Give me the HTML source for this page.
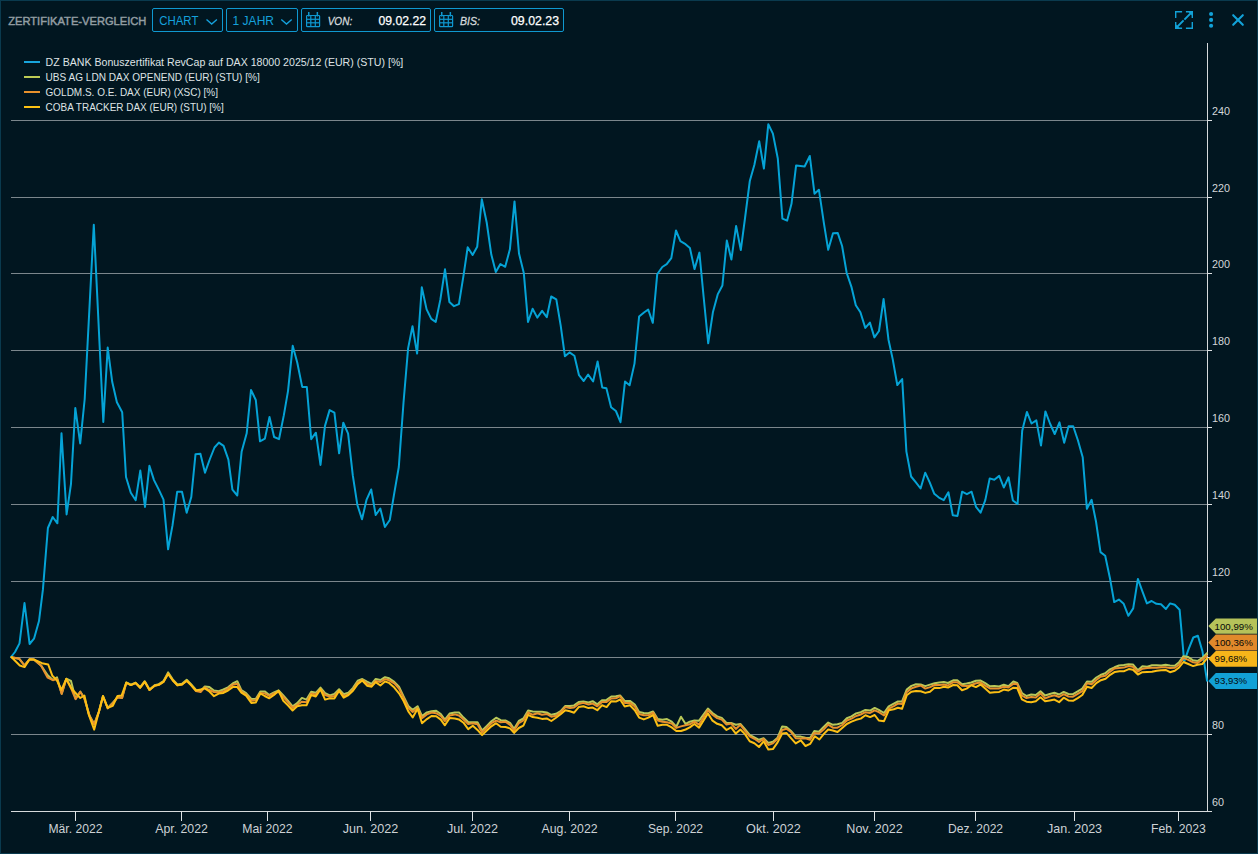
<!DOCTYPE html>
<html><head><meta charset="utf-8">
<style>
html,body{margin:0;padding:0;background:#011620;}
body{width:1258px;height:854px;overflow:hidden;}
svg{display:block;font-family:"Liberation Sans", sans-serif;}
</style></head>
<body>
<svg width="1258" height="854" viewBox="0 0 1258 854">
<rect x="0" y="0" width="1258" height="854" fill="#011620"/>
<rect x="0.5" y="0.5" width="1257" height="853" fill="none" stroke="#0a3a4e" stroke-width="1"/>

<!-- header -->
<text x="8.2" y="24.6" font-size="11.7" fill="#939ea3" stroke="#939ea3" stroke-width="0.45" textLength="138.2" lengthAdjust="spacingAndGlyphs">ZERTIFIKATE-VERGLEICH</text>
<rect x="152.5" y="8.5" width="70" height="23" rx="1.5" fill="none" stroke="#0f98d0"/>
<text x="159.2" y="25" font-size="12.5" fill="#15a1dc" textLength="39.2" lengthAdjust="spacingAndGlyphs">CHART</text>
<polyline points="206.5,19.5 211.7,24 216.9,19.5" fill="none" stroke="#15a1dc" stroke-width="1.4"/>
<rect x="226.5" y="8.5" width="71" height="23" rx="1.5" fill="none" stroke="#0f98d0"/>
<text x="232.6" y="25" font-size="12.5" fill="#15a1dc" textLength="41.4" lengthAdjust="spacingAndGlyphs">1 JAHR</text>
<polyline points="281.3,19.5 286.5,24 291.7,19.5" fill="none" stroke="#15a1dc" stroke-width="1.4"/>

<rect x="301.5" y="8.5" width="129" height="23" rx="1.5" fill="none" stroke="#0f98d0"/>
<g fill="none" stroke="#0f98d0" stroke-width="1.2">
<rect x="306.6" y="15.5" width="13" height="11.2" rx="0.8"/>
<line x1="310.8" y1="15.5" x2="310.8" y2="26.7"/><line x1="315.3" y1="15.5" x2="315.3" y2="26.7"/>
<line x1="306.6" y1="19.3" x2="319.6" y2="19.3"/><line x1="306.6" y1="22.8" x2="319.6" y2="22.8"/>
</g>
<g fill="#0f98d0"><rect x="308" y="12" width="1.5" height="4.5"/><rect x="316.6" y="12" width="1.5" height="4.5"/></g>
<text x="327.7" y="24.8" font-size="11.5" font-style="italic" fill="#d6dadc" stroke="#d6dadc" stroke-width="0.3" textLength="24.5" lengthAdjust="spacingAndGlyphs">VON:</text>
<text x="378.4" y="24.9" font-size="12.5" fill="#ffffff" stroke="#ffffff" stroke-width="0.25" textLength="47.6" lengthAdjust="spacingAndGlyphs">09.02.22</text>

<rect x="434.5" y="8.5" width="129" height="23" rx="1.5" fill="none" stroke="#0f98d0"/>
<g fill="none" stroke="#0f98d0" stroke-width="1.2">
<rect x="439.6" y="15.5" width="13" height="11.2" rx="0.8"/>
<line x1="443.8" y1="15.5" x2="443.8" y2="26.7"/><line x1="448.3" y1="15.5" x2="448.3" y2="26.7"/>
<line x1="439.6" y1="19.3" x2="452.6" y2="19.3"/><line x1="439.6" y1="22.8" x2="452.6" y2="22.8"/>
</g>
<g fill="#0f98d0"><rect x="441" y="12" width="1.5" height="4.5"/><rect x="449.6" y="12" width="1.5" height="4.5"/></g>
<text x="460" y="24.8" font-size="11.5" font-style="italic" fill="#d6dadc" stroke="#d6dadc" stroke-width="0.3" textLength="19.9" lengthAdjust="spacingAndGlyphs">BIS:</text>
<text x="511" y="24.9" font-size="12.5" fill="#ffffff" stroke="#ffffff" stroke-width="0.25" textLength="48.1" lengthAdjust="spacingAndGlyphs">09.02.23</text>

<!-- right icons -->
<g fill="none" stroke="#12a2d8" stroke-width="1.4">
<path d="M1175.7 17.9 V11.7 H1182.1"/>
<path d="M1192.3 21.9 V28.3 H1185.9"/>
<path d="M1185.9 11.7 H1192.3 V18.1"/>
<path d="M1175.7 21.9 V28.3 H1182.1"/>
<path d="M1191.6 12.4 L1184.4 19.6 M1183.6 20.4 L1176.4 27.6" stroke-width="2"/>
<path d="M1233.2 15.2 L1242.8 24.8 M1242.8 15.2 L1233.2 24.8" stroke-width="2.1" stroke-linecap="round"/>
</g>
<g fill="#12a2d8">
<polygon points="1187.5,11 1193,11 1193,16.5"/>
<polygon points="1175,23.5 1175,29 1180.5,29"/>
<circle cx="1211.1" cy="14" r="2.05"/><circle cx="1211.1" cy="19.9" r="2.05"/><circle cx="1211.1" cy="25.8" r="2.05"/>
</g>

<!-- legend -->
<g stroke-width="2">
<line x1="24" y1="62" x2="40" y2="62" stroke="#18a5dc"/>
<line x1="24" y1="77" x2="40" y2="77" stroke="#bccb55"/>
<line x1="24" y1="92" x2="40" y2="92" stroke="#e8912c"/>
<line x1="24" y1="107" x2="40" y2="107" stroke="#fcc214"/>
</g>
<g font-size="10.8" fill="#dfe3e5">
<text x="45.6" y="65.8" textLength="357.7" lengthAdjust="spacingAndGlyphs">DZ BANK Bonuszertifikat RevCap auf DAX 18000 2025/12 (EUR) (STU) [%]</text>
<text x="45.6" y="80.8" textLength="214.2" lengthAdjust="spacingAndGlyphs">UBS AG LDN DAX OPENEND (EUR) (STU) [%]</text>
<text x="45.6" y="95.8" textLength="172.4" lengthAdjust="spacingAndGlyphs">GOLDM.S. O.E. DAX (EUR) (XSC) [%]</text>
<text x="45.6" y="110.8" textLength="178.1" lengthAdjust="spacingAndGlyphs">COBA TRACKER DAX (EUR) (STU) [%]</text>
</g>

<!-- grid -->
<line x1="11" y1="120.5" x2="1207" y2="120.5" stroke="#7b868c" stroke-width="1"/><line x1="1207" y1="120.5" x2="1212" y2="120.5" stroke="#dfe3e5" stroke-width="1"/><line x1="11" y1="197.5" x2="1207" y2="197.5" stroke="#7b868c" stroke-width="1"/><line x1="1207" y1="197.5" x2="1212" y2="197.5" stroke="#dfe3e5" stroke-width="1"/><line x1="11" y1="273.5" x2="1207" y2="273.5" stroke="#7b868c" stroke-width="1"/><line x1="1207" y1="273.5" x2="1212" y2="273.5" stroke="#dfe3e5" stroke-width="1"/><line x1="11" y1="350.5" x2="1207" y2="350.5" stroke="#7b868c" stroke-width="1"/><line x1="1207" y1="350.5" x2="1212" y2="350.5" stroke="#dfe3e5" stroke-width="1"/><line x1="11" y1="427.5" x2="1207" y2="427.5" stroke="#7b868c" stroke-width="1"/><line x1="1207" y1="427.5" x2="1212" y2="427.5" stroke="#dfe3e5" stroke-width="1"/><line x1="11" y1="504.5" x2="1207" y2="504.5" stroke="#7b868c" stroke-width="1"/><line x1="1207" y1="504.5" x2="1212" y2="504.5" stroke="#dfe3e5" stroke-width="1"/><line x1="11" y1="581.5" x2="1207" y2="581.5" stroke="#7b868c" stroke-width="1"/><line x1="1207" y1="581.5" x2="1212" y2="581.5" stroke="#dfe3e5" stroke-width="1"/><line x1="11" y1="657.5" x2="1207" y2="657.5" stroke="#7b868c" stroke-width="1"/><line x1="1207" y1="657.5" x2="1212" y2="657.5" stroke="#dfe3e5" stroke-width="1"/><line x1="11" y1="734.5" x2="1207" y2="734.5" stroke="#7b868c" stroke-width="1"/><line x1="1207" y1="734.5" x2="1212" y2="734.5" stroke="#dfe3e5" stroke-width="1"/>
<!-- axes -->
<line x1="1207.5" y1="43" x2="1207.5" y2="811" stroke="#d6dadc" stroke-width="1"/>
<line x1="11" y1="811.5" x2="1212" y2="811.5" stroke="#d6dadc" stroke-width="1"/>
<text x="1212" y="114.5" font-size="11.5" fill="#d3d7da" textLength="18.0" lengthAdjust="spacingAndGlyphs">240</text><text x="1212" y="191.5" font-size="11.5" fill="#d3d7da" textLength="18.0" lengthAdjust="spacingAndGlyphs">220</text><text x="1212" y="267.5" font-size="11.5" fill="#d3d7da" textLength="18.0" lengthAdjust="spacingAndGlyphs">200</text><text x="1212" y="344.5" font-size="11.5" fill="#d3d7da" textLength="18.0" lengthAdjust="spacingAndGlyphs">180</text><text x="1212" y="421.5" font-size="11.5" fill="#d3d7da" textLength="18.0" lengthAdjust="spacingAndGlyphs">160</text><text x="1212" y="498.5" font-size="11.5" fill="#d3d7da" textLength="18.0" lengthAdjust="spacingAndGlyphs">140</text><text x="1212" y="575.5" font-size="11.5" fill="#d3d7da" textLength="18.0" lengthAdjust="spacingAndGlyphs">120</text><text x="1212" y="728.5" font-size="11.5" fill="#d3d7da" textLength="12.0" lengthAdjust="spacingAndGlyphs">80</text><text x="1212" y="805.5" font-size="11.5" fill="#d3d7da" textLength="12.0" lengthAdjust="spacingAndGlyphs">60</text>
<line x1="75.5" y1="811" x2="75.5" y2="821" stroke="#dfe3e5" stroke-width="1"/><text x="48.5" y="832.8" font-size="12.6" fill="#cdd2d5" textLength="54" lengthAdjust="spacingAndGlyphs">Mär. 2022</text><line x1="181.5" y1="811" x2="181.5" y2="821" stroke="#dfe3e5" stroke-width="1"/><text x="155.2" y="832.8" font-size="12.6" fill="#cdd2d5" textLength="52.7" lengthAdjust="spacingAndGlyphs">Apr. 2022</text><line x1="267.5" y1="811" x2="267.5" y2="821" stroke="#dfe3e5" stroke-width="1"/><text x="242.3" y="832.8" font-size="12.6" fill="#cdd2d5" textLength="50.3" lengthAdjust="spacingAndGlyphs">Mai 2022</text><line x1="370.5" y1="811" x2="370.5" y2="821" stroke="#dfe3e5" stroke-width="1"/><text x="342.8" y="832.8" font-size="12.6" fill="#cdd2d5" textLength="55.4" lengthAdjust="spacingAndGlyphs">Jun. 2022</text><line x1="472.5" y1="811" x2="472.5" y2="821" stroke="#dfe3e5" stroke-width="1"/><text x="446.9" y="832.8" font-size="12.6" fill="#cdd2d5" textLength="51.1" lengthAdjust="spacingAndGlyphs">Jul. 2022</text><line x1="569.5" y1="811" x2="569.5" y2="821" stroke="#dfe3e5" stroke-width="1"/><text x="541.5" y="832.8" font-size="12.6" fill="#cdd2d5" textLength="56.1" lengthAdjust="spacingAndGlyphs">Aug. 2022</text><line x1="675.5" y1="811" x2="675.5" y2="821" stroke="#dfe3e5" stroke-width="1"/><text x="648.0" y="832.8" font-size="12.6" fill="#cdd2d5" textLength="55.1" lengthAdjust="spacingAndGlyphs">Sep. 2022</text><line x1="773.5" y1="811" x2="773.5" y2="821" stroke="#dfe3e5" stroke-width="1"/><text x="746.1" y="832.8" font-size="12.6" fill="#cdd2d5" textLength="54.8" lengthAdjust="spacingAndGlyphs">Okt. 2022</text><line x1="874.5" y1="811" x2="874.5" y2="821" stroke="#dfe3e5" stroke-width="1"/><text x="846.3" y="832.8" font-size="12.6" fill="#cdd2d5" textLength="56.4" lengthAdjust="spacingAndGlyphs">Nov. 2022</text><line x1="975.5" y1="811" x2="975.5" y2="821" stroke="#dfe3e5" stroke-width="1"/><text x="948.0" y="832.8" font-size="12.6" fill="#cdd2d5" textLength="55.1" lengthAdjust="spacingAndGlyphs">Dez. 2022</text><line x1="1074.5" y1="811" x2="1074.5" y2="821" stroke="#dfe3e5" stroke-width="1"/><text x="1047.0" y="832.8" font-size="12.6" fill="#cdd2d5" textLength="55.1" lengthAdjust="spacingAndGlyphs">Jan. 2023</text><line x1="1178.5" y1="811" x2="1178.5" y2="821" stroke="#dfe3e5" stroke-width="1"/><text x="1151.0" y="832.8" font-size="12.6" fill="#cdd2d5" textLength="54.9" lengthAdjust="spacingAndGlyphs">Feb. 2023</text>

<!-- series -->
<g fill="none" stroke-width="2" stroke-linejoin="round" stroke-linecap="round">
<polyline points="11.0,657.0 15.0,652.0 19.5,643.4 24.5,603.0 29.6,644.0 34.0,638.7 39.0,621.0 42.9,589.7 47.9,528.0 52.7,517.0 57.4,523.3 61.5,433.2 66.6,514.4 71.0,483.8 75.3,408.0 80.2,443.4 84.7,399.0 93.8,224.7 103.3,422.0 107.7,347.6 112.2,381.8 116.9,402.3 122.2,412.2 126.0,477.0 130.8,492.8 135.7,500.2 140.3,470.6 145.0,506.9 149.4,465.8 154.0,480.1 158.8,489.6 163.5,499.7 168.1,549.3 172.5,525.4 177.2,491.7 182.0,491.7 186.7,512.8 191.3,497.0 195.5,454.2 200.4,453.8 205.0,472.7 209.9,459.0 214.5,447.5 218.9,442.6 223.6,445.8 228.4,459.7 232.4,489.6 237.3,495.5 241.6,451.8 246.7,433.3 251.0,390.0 255.8,400.0 260.0,441.3 264.9,438.6 269.5,417.0 274.1,437.0 279.0,439.2 283.8,415.4 288.0,391.1 292.7,345.8 297.3,362.7 302.2,386.9 306.8,386.9 311.2,439.2 315.9,432.7 320.5,464.9 325.0,425.9 329.6,410.1 334.4,412.6 339.1,453.3 343.3,422.7 348.1,433.7 352.8,475.4 357.3,504.7 362.0,519.2 366.6,499.6 371.2,489.5 375.7,515.0 380.3,508.5 384.9,527.0 389.8,520.0 394.4,492.3 398.8,467.0 403.5,402.7 408.1,348.4 412.5,326.2 417.1,353.6 421.8,287.2 426.6,309.4 431.3,318.9 435.7,322.0 440.3,299.9 445.0,269.3 449.4,302.0 454.0,306.2 458.9,304.1 463.5,275.6 467.7,247.2 472.6,255.0 477.2,246.8 481.8,199.3 486.7,222.5 491.3,254.6 495.8,272.1 500.4,264.0 505.2,266.8 509.9,249.3 514.5,201.4 519.0,253.5 523.8,272.9 528.0,322.0 532.6,308.8 537.3,317.6 542.1,310.9 546.8,317.2 551.2,296.5 556.3,299.3 560.7,325.6 564.9,356.2 569.5,352.4 574.4,355.8 579.0,375.2 583.7,381.0 588.1,374.5 593.1,381.5 597.6,361.5 602.2,387.4 606.4,388.2 611.1,407.2 615.9,411.0 620.5,422.2 625.0,381.5 629.6,385.3 634.5,363.6 639.1,316.6 644.0,312.5 648.2,309.5 652.8,322.8 657.2,274.3 662.3,267.0 666.7,264.2 671.3,258.1 676.0,230.5 680.4,241.2 685.5,244.2 689.9,248.0 694.5,269.1 699.4,252.6 703.6,296.5 708.2,343.3 712.9,312.3 717.7,294.4 722.4,285.5 726.8,240.6 731.4,259.6 736.1,225.9 740.8,250.1 745.1,217.5 749.8,181.0 754.4,164.8 759.2,141.2 763.9,168.6 768.3,124.3 772.9,133.6 777.8,158.5 782.4,218.6 787.1,220.7 791.5,203.8 796.1,165.4 800.4,166.0 804.6,166.5 809.8,156.0 814.5,193.7 818.9,189.7 824.0,223.8 828.2,249.8 833.0,233.3 837.7,232.9 842.1,246.0 846.7,273.0 851.6,287.4 855.8,305.3 860.4,312.3 865.3,327.9 869.9,322.6 874.4,337.4 879.0,331.0 883.6,299.0 888.5,339.7 892.7,359.1 897.3,385.0 902.2,379.1 906.4,451.6 911.1,476.5 915.7,482.2 920.6,488.5 925.2,472.7 929.6,482.2 934.3,493.8 938.9,497.6 943.8,500.1 948.4,492.3 952.8,515.3 957.5,515.9 962.1,491.7 966.9,494.2 971.6,491.7 976.0,506.8 980.6,512.7 985.3,500.1 989.7,478.4 994.3,479.7 999.2,475.9 1003.8,487.5 1008.5,477.3 1012.9,500.5 1017.6,504.0 1022.2,430.8 1026.9,411.9 1031.5,423.5 1036.3,420.3 1041.0,445.6 1045.4,411.4 1050.0,423.5 1054.7,434.0 1059.5,422.4 1064.2,442.8 1068.6,426.2 1073.2,426.2 1077.9,440.3 1082.7,457.2 1086.9,508.8 1091.6,499.8 1096.0,521.5 1100.5,552.1 1105.2,555.7 1110.0,578.5 1114.2,602.1 1118.9,599.6 1123.7,603.8 1128.4,615.8 1133.2,608.4 1137.9,578.9 1142.3,591.1 1146.9,603.4 1151.6,601.0 1156.4,603.8 1161.0,604.2 1165.9,609.0 1170.1,603.4 1174.7,604.8 1179.6,609.7 1184.2,661.7 1188.6,649.1 1193.3,637.5 1197.9,635.8 1202.4,651.2 1207.0,680.7" stroke="#05a3d6"/>
<polyline points="11.6,657.2 19.3,658.8 24.5,665.4 29.6,659.2 33.8,659.4 41.0,665.4 47.7,675.3 52.9,680.0 57.0,677.4 61.7,693.7 66.3,678.7 71.0,681.0 75.6,698.8 80.3,691.6 84.4,698.3 89.6,715.8 94.2,724.1 98.9,711.7 103.0,696.1 107.7,708.0 112.3,703.3 117.5,697.1 122.1,697.7 126.3,682.5 130.9,684.6 135.6,682.6 140.2,687.2 144.8,681.2 149.5,689.4 154.6,685.2 158.8,684.1 163.4,681.2 168.1,672.4 172.7,679.4 177.4,684.5 182.0,683.8 186.7,679.8 191.3,684.4 196.0,690.0 200.6,691.0 204.8,686.4 209.4,687.1 214.0,690.5 218.7,691.3 223.4,689.5 228.0,687.3 232.7,683.5 237.3,681.2 241.4,690.2 246.1,693.1 251.3,699.0 255.9,698.8 260.3,691.4 264.7,691.4 269.3,695.0 274.0,692.4 278.6,690.3 283.3,695.5 287.9,700.6 292.6,706.3 297.2,703.2 301.9,697.9 306.5,699.6 311.2,691.7 315.8,692.8 320.5,687.6 325.1,693.2 329.8,695.5 334.4,693.9 339.1,689.3 343.7,694.2 348.4,692.6 353.0,687.9 357.7,680.7 362.3,679.0 367.0,681.7 371.6,683.8 375.7,679.0 380.4,680.0 385.0,677.2 389.1,678.3 394.3,681.9 399.0,686.6 403.6,696.4 408.3,706.0 412.7,709.9 417.6,706.2 422.0,716.1 426.9,712.4 431.5,711.3 436.2,710.8 440.8,714.0 444.9,719.6 449.6,713.5 454.8,712.4 458.9,712.4 463.5,717.6 468.2,721.9 472.8,722.2 477.5,722.3 482.1,730.5 486.8,725.9 491.4,721.2 496.1,717.7 500.7,720.2 505.4,720.4 510.0,722.8 514.1,728.8 518.8,721.0 523.4,718.5 528.1,710.5 532.7,711.5 537.4,711.7 542.0,711.7 546.7,712.5 551.3,714.8 556.0,713.8 560.6,711.2 565.3,706.0 569.9,706.1 574.1,705.4 578.7,702.0 583.4,701.6 588.5,702.5 592.7,701.2 597.3,704.3 602.0,700.3 606.6,699.9 611.3,696.5 615.9,696.3 620.1,695.4 624.7,700.9 629.9,700.9 634.8,704.5 639.1,712.0 643.8,712.9 648.4,713.3 653.1,711.4 657.7,719.1 662.4,719.8 667.0,719.1 671.7,721.7 676.3,726.7 681.0,716.7 685.6,724.0 689.8,721.7 694.4,720.5 699.1,720.7 707.9,708.5 712.5,713.0 717.2,716.4 721.8,717.9 726.5,722.9 731.1,722.9 735.8,724.8 740.4,724.0 745.0,729.2 749.7,734.8 754.4,737.3 759.0,739.8 763.6,738.2 768.3,742.9 772.9,741.8 777.6,737.7 782.2,726.4 786.4,727.0 791.0,731.0 795.7,736.4 800.8,736.6 805.5,737.7 810.1,737.9 814.3,731.0 818.9,731.7 823.6,726.9 828.2,722.6 832.9,724.8 837.5,724.3 842.2,722.9 846.8,718.3 851.5,716.4 856.1,713.4 860.8,712.2 865.4,709.9 870.1,710.6 874.7,707.9 878.8,709.8 884.0,713.0 888.7,706.4 893.8,703.7 897.9,701.5 902.0,701.6 906.7,689.6 911.4,685.9 916.0,684.2 920.7,684.5 925.3,686.1 930.0,684.6 934.6,683.2 939.3,682.5 943.9,682.0 948.0,683.0 953.2,680.3 957.3,680.3 962.0,684.3 966.6,683.5 971.3,682.5 975.9,680.7 980.6,680.5 985.2,683.2 989.9,686.3 994.5,685.9 999.2,686.5 1003.8,684.7 1008.5,686.3 1013.4,681.5 1017.2,682.9 1021.9,693.0 1026.5,696.0 1031.2,694.5 1035.8,695.0 1040.5,691.3 1045.1,695.5 1049.8,694.0 1054.4,692.8 1059.1,694.5 1063.7,691.9 1068.4,694.0 1073.0,694.2 1077.7,691.3 1082.3,688.6 1087.0,681.5 1091.6,681.8 1096.3,677.5 1100.5,675.0 1105.2,673.3 1110.0,669.3 1114.5,667.3 1119.0,665.5 1123.8,665.1 1128.6,664.3 1132.9,664.4 1137.8,670.2 1142.4,666.2 1147.2,666.7 1152.0,665.3 1156.8,665.3 1161.2,665.4 1165.6,664.8 1170.0,665.5 1174.8,665.8 1179.1,662.2 1183.5,656.2 1188.3,657.1 1193.1,660.3 1197.5,661.0 1202.3,657.9 1207.0,653.1" stroke="#b9c858"/>
<polyline points="11.6,657.2 19.3,658.8 24.5,665.5 29.6,659.3 33.8,659.5 41.0,665.5 47.7,677.7 52.9,680.2 57.0,678.9 61.7,693.9 66.3,678.9 71.0,688.2 75.6,699.1 80.3,691.9 84.4,698.6 89.6,716.1 94.2,724.4 98.9,712.0 103.0,696.5 107.7,708.4 112.3,703.7 117.5,697.5 122.1,698.1 126.3,682.9 130.9,685.1 135.6,683.1 140.2,687.7 144.8,681.7 149.5,690.0 154.6,685.8 158.8,684.8 163.4,681.9 168.1,673.5 172.7,680.2 177.4,685.3 182.0,684.6 186.7,680.7 191.3,685.3 196.0,691.0 200.6,692.0 204.8,687.4 209.4,690.0 214.0,692.0 218.7,692.5 223.4,691.5 228.0,688.5 232.7,684.8 237.3,683.8 241.4,691.5 246.1,694.5 251.3,700.8 255.9,700.3 260.3,692.9 264.7,693.4 269.3,696.0 274.0,693.4 278.6,691.9 283.3,697.0 287.9,702.2 292.6,707.9 297.2,704.8 301.9,701.7 306.5,702.2 311.2,693.4 315.8,694.5 320.5,689.3 325.1,695.0 329.8,696.5 334.4,696.0 339.1,690.8 343.7,696.0 348.4,694.5 353.0,689.8 357.7,682.6 362.3,680.0 367.0,683.6 371.6,685.7 375.7,681.0 380.4,682.0 385.0,679.1 389.1,680.3 394.3,683.4 399.0,688.6 403.6,697.9 408.3,708.0 412.7,711.9 417.6,708.2 422.0,718.1 426.9,714.4 431.5,712.6 436.2,713.2 440.8,716.0 444.9,721.2 449.6,715.5 454.8,714.4 458.9,715.5 463.5,719.6 468.2,723.9 472.8,723.2 477.5,724.3 482.1,732.5 486.8,727.9 491.4,723.2 496.1,720.6 500.7,722.2 505.4,721.7 510.0,724.8 514.1,730.8 518.8,723.1 523.4,720.5 528.1,712.5 532.7,714.8 537.4,713.3 542.0,714.8 546.7,714.0 551.3,716.7 556.0,715.8 560.6,712.2 565.3,707.1 569.9,708.1 574.1,707.4 578.7,704.0 583.4,702.9 588.5,704.5 592.7,703.6 597.3,706.3 602.0,701.9 606.6,701.9 611.3,698.5 615.9,698.3 620.1,696.2 624.7,702.9 629.9,702.9 634.8,706.5 639.1,714.0 643.8,715.3 648.4,715.3 653.1,712.6 657.7,720.5 662.4,721.7 667.0,722.2 671.7,723.6 676.3,727.9 681.0,726.4 685.6,725.3 689.8,724.3 694.4,721.7 699.1,724.6 707.9,710.3 712.5,714.7 717.2,718.1 721.8,719.6 726.5,724.6 731.1,723.6 735.8,728.9 740.4,724.8 745.0,730.8 749.7,736.4 754.4,738.8 759.0,742.0 763.6,738.8 768.3,745.0 772.9,743.4 777.6,738.8 782.2,730.0 786.4,728.7 791.0,732.0 795.7,738.2 800.8,738.4 805.5,738.2 810.1,739.8 814.3,732.9 818.9,733.6 823.6,729.5 828.2,724.6 832.9,727.7 837.5,727.7 842.2,725.0 846.8,720.5 851.5,718.6 856.1,716.0 860.8,714.5 865.4,712.2 870.1,712.9 874.7,710.3 878.8,712.2 884.0,715.5 888.7,708.7 893.8,706.2 897.9,703.6 902.0,704.1 906.7,692.2 911.4,688.4 916.0,686.7 920.7,685.5 925.3,688.6 930.0,687.1 934.6,685.0 939.3,685.0 943.9,684.5 948.0,685.5 953.2,682.2 957.3,682.2 962.0,685.7 966.6,686.0 971.3,685.0 975.9,683.2 980.6,682.6 985.2,685.7 989.9,688.4 994.5,688.4 999.2,688.4 1003.8,686.7 1008.5,687.5 1013.4,683.8 1017.2,684.1 1021.9,695.5 1026.5,698.1 1031.2,697.0 1035.8,697.5 1040.5,693.4 1045.1,698.4 1049.8,696.5 1054.4,695.3 1059.1,697.0 1063.7,694.2 1068.4,696.5 1073.0,696.7 1077.7,693.9 1082.3,691.1 1087.0,683.3 1091.6,684.3 1096.3,680.0 1100.5,676.8 1105.2,675.8 1110.0,671.8 1114.5,668.4 1119.0,668.0 1123.8,667.6 1128.6,666.0 1132.9,666.7 1137.8,671.7 1142.4,668.7 1147.2,668.0 1152.0,667.8 1156.8,667.8 1161.2,667.3 1165.6,667.3 1170.0,668.0 1174.8,667.8 1179.1,664.7 1183.5,657.9 1188.3,659.9 1193.1,662.3 1197.5,662.9 1202.3,659.7 1207.0,655.6" stroke="#e8902c"/>
<polyline points="11.6,657.2 19.8,665.5 24.5,667.1 29.6,659.3 33.8,659.5 42.0,663.2 48.2,664.5 52.4,675.8 57.0,680.5 61.4,689.8 66.3,678.9 72.0,689.3 80.3,698.0 84.4,695.5 88.5,714.0 94.2,729.6 103.0,696.0 107.7,707.9 112.8,705.8 117.5,696.0 121.6,695.5 126.3,682.6 130.9,685.1 135.6,682.9 140.2,687.7 144.8,681.7 149.5,690.0 154.6,685.8 158.8,684.8 163.4,681.9 168.1,674.0 172.7,680.2 177.4,685.3 182.0,684.6 186.7,680.7 191.3,685.3 196.0,690.5 200.6,689.5 204.8,688.4 209.4,691.5 214.0,696.2 218.7,693.6 223.4,692.9 228.0,690.5 232.7,687.1 237.3,687.1 241.4,692.6 246.1,695.7 251.3,702.9 255.9,702.4 260.3,693.5 264.7,696.0 269.3,698.3 274.0,695.0 278.6,690.8 283.3,700.7 287.9,705.3 292.6,710.5 297.2,706.3 301.9,705.3 306.5,705.3 311.2,695.0 315.8,696.5 320.5,689.3 325.1,699.6 329.8,698.3 334.4,698.6 339.1,690.8 343.7,697.6 348.4,695.0 353.0,690.8 357.7,684.1 362.3,680.5 367.0,685.7 371.6,686.7 375.7,682.1 380.4,685.5 385.0,681.5 389.1,682.9 394.3,687.6 399.0,693.3 403.6,701.0 408.3,711.3 412.7,717.5 417.6,708.8 422.0,723.2 426.9,719.1 431.5,716.0 436.2,716.3 440.8,719.6 444.9,725.3 449.6,718.1 454.8,718.6 458.9,719.4 463.5,722.7 468.2,729.1 472.8,725.8 477.5,729.9 482.1,735.1 486.8,730.5 491.4,726.3 496.1,723.2 500.7,726.8 505.4,727.0 510.0,728.4 514.1,732.9 518.8,728.0 523.4,725.7 528.1,714.8 532.7,717.1 537.4,717.7 542.0,718.9 546.7,718.4 551.3,721.0 556.0,717.7 560.6,714.3 565.3,710.2 569.9,711.2 574.1,712.7 578.7,707.1 583.4,706.3 588.5,708.1 592.7,707.6 597.3,710.2 602.0,705.3 606.6,707.1 611.3,701.2 615.9,701.6 620.1,699.5 624.7,706.5 629.9,705.3 634.8,710.3 639.1,717.6 643.8,719.4 648.4,717.6 653.1,715.0 657.7,725.8 662.4,724.8 667.0,724.8 671.7,727.4 676.3,731.0 681.0,731.0 685.6,729.5 689.8,727.4 694.4,724.0 699.1,727.7 707.9,713.4 712.5,720.7 717.2,723.8 721.8,725.3 726.5,730.0 731.1,727.4 735.8,733.6 740.4,729.5 745.0,734.1 749.7,741.3 754.4,743.2 759.0,747.0 763.6,741.3 768.3,749.6 772.9,749.1 777.6,742.4 782.2,733.6 786.4,732.9 791.0,738.2 795.7,743.4 800.8,740.3 805.5,746.0 810.1,743.9 814.8,736.2 819.4,739.5 824.1,733.6 828.2,729.5 832.9,730.5 837.5,732.0 842.2,727.9 846.8,724.0 851.5,721.7 856.1,719.8 860.8,718.6 865.4,715.3 870.1,717.1 874.7,715.0 878.8,720.5 884.0,721.2 888.7,710.3 893.8,709.3 897.9,707.7 902.0,708.8 906.7,695.3 911.4,691.7 916.0,690.9 920.7,691.2 925.3,692.9 930.0,691.7 934.6,687.8 939.3,688.1 943.9,686.7 948.0,687.6 953.2,685.0 957.3,685.3 962.0,690.2 966.6,688.6 971.3,685.3 975.9,687.1 980.6,684.5 985.2,688.6 989.9,692.7 994.5,692.2 999.2,691.9 1003.8,689.6 1008.5,690.5 1013.4,687.7 1017.2,688.0 1021.9,699.4 1026.5,701.7 1031.2,702.2 1035.8,701.2 1040.5,697.3 1045.1,701.2 1049.8,700.4 1054.4,699.6 1059.1,702.2 1063.7,697.7 1068.4,700.4 1073.0,700.8 1077.7,698.1 1082.3,695.0 1087.0,686.7 1091.6,688.0 1096.3,683.1 1100.9,680.2 1105.6,678.7 1110.2,674.8 1114.9,671.9 1119.5,671.2 1124.2,671.2 1128.8,669.1 1133.0,669.8 1137.9,674.5 1142.4,672.2 1147.2,671.9 1152.0,671.7 1156.8,670.8 1161.2,670.2 1165.6,669.9 1170.0,672.2 1174.8,670.8 1179.1,667.5 1183.5,662.0 1188.3,664.0 1193.1,666.1 1197.5,664.7 1202.3,664.0 1207.0,658.4" stroke="#fcbf14"/>
</g>

<!-- value tags -->
<g font-size="9.7" fill="#050809">
<path d="M1208.3 626.1 L1215.8 618.4 H1257 V633.8 H1215.8 Z" fill="#b5c25a"/>
<text x="1214.6" y="630.1" textLength="38.2" lengthAdjust="spacingAndGlyphs">100,99%</text>
<path d="M1208.3 642.5 L1215.8 634.5 H1257 V650.6 H1215.8 Z" fill="#e0892b"/>
<text x="1214.6" y="646.1" textLength="38.2" lengthAdjust="spacingAndGlyphs">100,36%</text>
<path d="M1208.3 658.8 L1215.8 651 H1257 V666.7 H1215.8 Z" fill="#f6b51a"/>
<text x="1214.6" y="661.6" textLength="32.5" lengthAdjust="spacingAndGlyphs">99,68%</text>
<path d="M1208.3 681 L1215.8 673 H1257 V689 H1215.8 Z" fill="#12a1d6"/>
<text x="1214.6" y="684.1" textLength="32.5" lengthAdjust="spacingAndGlyphs">93,93%</text>
</g>
</svg>
</body></html>
